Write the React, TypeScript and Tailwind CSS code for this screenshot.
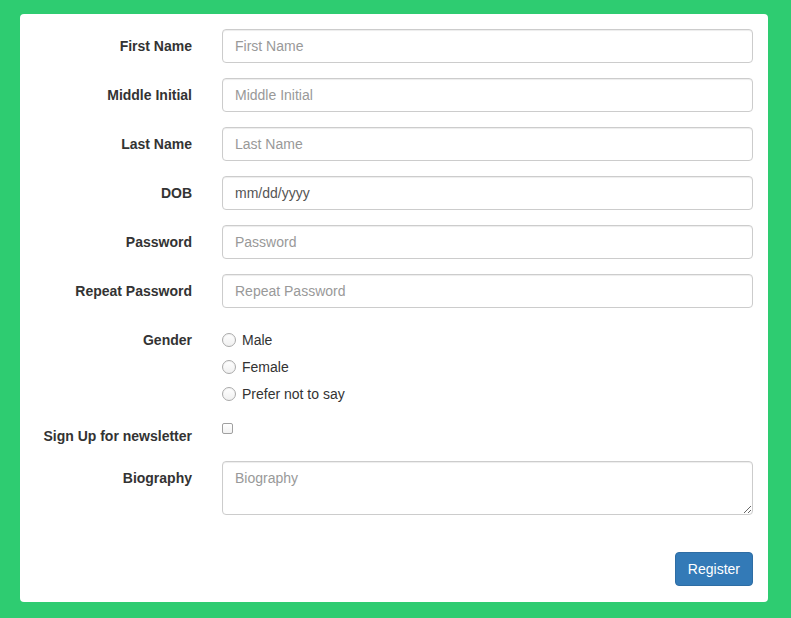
const font = { fontFamily: '"Liberation Sans", Arial, Helvetica, sans-serif' }

const textFields = [
  { label: 'First Name', placeholder: 'First Name', type: 'text' },
  { label: 'Middle Initial', placeholder: 'Middle Initial', type: 'text' },
  { label: 'Last Name', placeholder: 'Last Name', type: 'text' },
  { label: 'DOB', value: 'mm/dd/yyyy', type: 'text' },
  { label: 'Password', placeholder: 'Password', type: 'password' },
  { label: 'Repeat Password', placeholder: 'Repeat Password', type: 'password' },
]

const inputClass =
  'block w-full h-[34px] px-[12px] py-[6px] text-[14px] leading-[20px] text-[#555] bg-white border border-[#ccc] rounded-[4px] shadow-[inset_0_1px_1px_rgba(0,0,0,0.075)] placeholder:text-[#999] outline-none'

function Row({ label, children }: { label: string; children: React.ReactNode }) {
  return (
    <div className="flex mb-[15px]">
      <label className="w-[172px] shrink-0 pt-[7px] text-right text-[14px] leading-[20px] font-bold text-[#333]">
        {label}
      </label>
      <div className="ml-[30px] w-[531px]">{children}</div>
    </div>
  )
}

function Radio({ label }: { label: string }) {
  return (
    <label className="flex items-center h-[20px] mb-[7px] text-[14px] leading-[20px] text-[#333]">
      <span className="w-[14px] h-[14px] rounded-full border border-[#aaa] bg-gradient-to-b from-white to-[#f0f0f0] shadow-[inset_0_1px_1px_rgba(0,0,0,0.05)]" />
      <span className="ml-[6px]">{label}</span>
    </label>
  )
}

export default function App() {
  return (
    <div style={font} className="min-h-screen bg-[#2ecc71] pt-[14px] pb-[17px] pl-[20px]">
      <div className="w-[748px] bg-white rounded-[4px] pt-[15px] pb-[16px] pr-[15px]">
        {textFields.map((f) => (
          <Row key={f.label} label={f.label}>
            <input
              type={f.type}
              placeholder={f.placeholder}
              defaultValue={f.value}
              readOnly={!!f.value}
              className={inputClass}
            />
          </Row>
        ))}

        <Row label="Gender">
          <div className="pt-[7px]">
            <Radio label="Male" />
            <Radio label="Female" />
            <Radio label="Prefer not to say" />
          </div>
        </Row>

        <div className="flex mb-[15px] -mt-[7px]">
          <label className="w-[172px] shrink-0 pt-[7px] text-right text-[14px] leading-[20px] font-bold text-[#333]">
            Sign Up for newsletter
          </label>
          <div className="ml-[30px] w-[531px] h-[27px] pt-[4px]">
            <span className="block w-[11px] h-[11px] rounded-[2px] border border-[#a0a0a0] bg-gradient-to-b from-white to-[#f2f2f2]" />
          </div>
        </div>

        <Row label="Biography">
          <textarea
            rows={2}
            placeholder="Biography"
            className="block w-full h-[54px] px-[12px] py-[6px] text-[14px] leading-[20px] text-[#555] bg-white border border-[#ccc] rounded-[4px] shadow-[inset_0_1px_1px_rgba(0,0,0,0.075)] placeholder:text-[#999] outline-none"
          />
        </Row>

        <div className="flex justify-end pt-[22px]">
          <button className="h-[34px] px-[12px] text-[14px] leading-[20px] text-white bg-[#337ab7] border border-[#2e6da4] rounded-[4px]">
            Register
          </button>
        </div>
      </div>
    </div>
  )
}
